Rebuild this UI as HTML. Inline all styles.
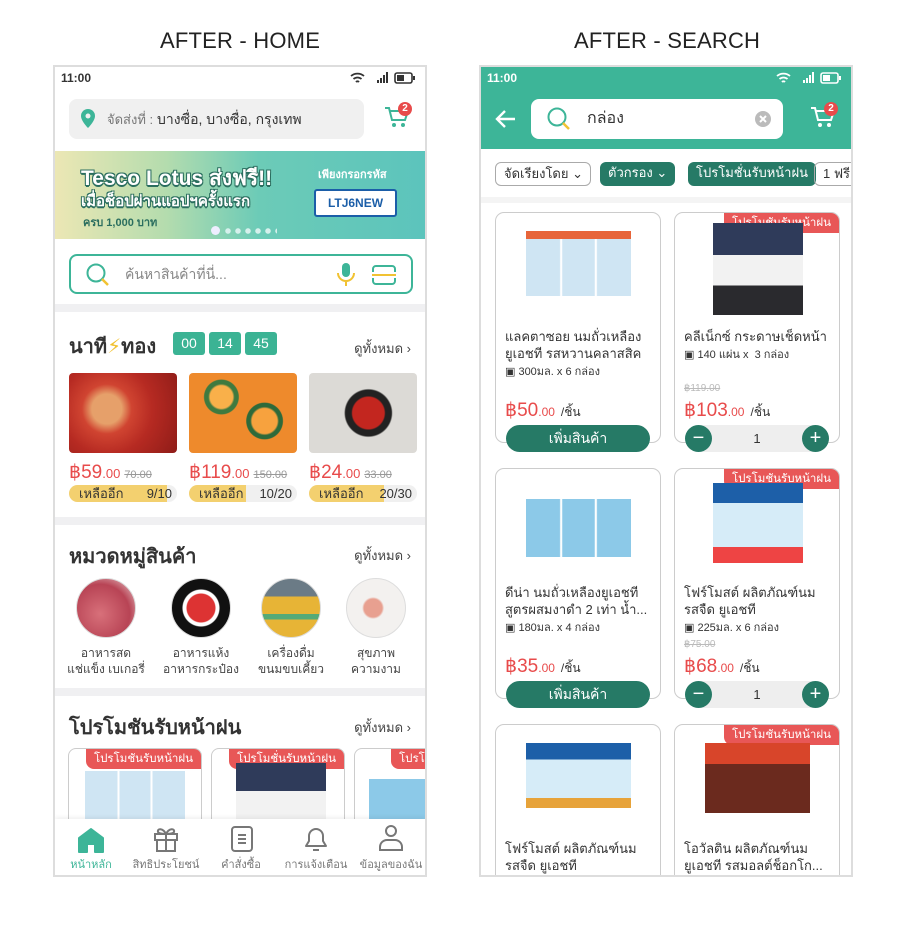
<!DOCTYPE html>
<html><head><meta charset="utf-8">
<style>
*{box-sizing:border-box;margin:0;padding:0}
body{width:906px;height:927px;background:#fff;font-family:"Liberation Sans","DejaVu Sans",sans-serif;position:relative;overflow:hidden;color:#333}
.abs{position:absolute}
.h1{font-size:22px;color:#222;top:28px;letter-spacing:.2px}
.phone{position:absolute;top:65px;width:374px;height:812px;border:2px solid #ddd;overflow:hidden;background:#fff}
.sb{position:absolute;left:0;top:0;width:100%;height:22px;font-size:12px;font-weight:bold;padding:4px 6px}
.sep{position:absolute;left:0;width:100%;background:#f0f0f2}
.teal{background:#3db598}
.tbox{position:absolute;top:265px;width:32px;height:23px;border-radius:3px;background:#3bb394;color:#fff;font-size:14px;text-align:center;line-height:23px}
.img{position:absolute;border-radius:4px}
.price{position:absolute;color:#e84b4b;font-size:19px}
.price small{font-size:13px}
.price s{color:#999;font-size:11px;margin-left:4px}
.bar{position:absolute;height:17px;border-radius:9px;background:#f0f0f0;overflow:hidden;font-size:13px;line-height:17px}
.bar i{position:absolute;left:0;top:0;bottom:0;background:#f3d06f}
.bar span{position:relative;padding-left:10px}
.bar b{position:absolute;right:5px;font-weight:normal}
.sec{position:absolute;left:14px;font-size:20px;font-weight:bold;color:#333}
.all{position:absolute;right:14px;font-size:13px;color:#444}
.circ{position:absolute;width:60px;height:60px;border-radius:50%;border:1px solid #ddd;overflow:hidden}
.cl{position:absolute;font-size:12px;color:#444;text-align:center;width:90px;line-height:16px}
.pcard{position:absolute;border:1px solid #ccc;border-radius:8px;background:#fff;overflow:hidden}
.tag{position:absolute;right:0;top:0;background:#e85757;color:#fff;font-size:11.5px;padding:1px 8px;border-bottom-left-radius:8px;white-space:nowrap}
.nav{position:absolute;left:0;bottom:0;width:100%;height:56px;background:#fff;box-shadow:0 -2px 4px rgba(0,0,0,.06)}
.ni{position:absolute;top:36px;font-size:11px;color:#777;text-align:center;width:76px}
.chip{position:absolute;top:95px;height:24px;border-radius:6px;font-size:13px;line-height:22px;padding:0 8px;white-space:nowrap}
.card{position:absolute;width:166px;height:231px;border:1px solid #ccc;border-radius:9px;background:#fff;overflow:hidden}
.ct{position:absolute;left:9px;top:115px;font-size:13px;line-height:17px;color:#333;width:150px}
.cs{font-size:11px;color:#333}
.cp{position:absolute;left:9px;color:#e84b4b;font-size:19px}
.cp small{font-size:12px}
.cp em{font-style:normal;color:#333;font-size:12px;margin-left:6px}
.btn{position:absolute;width:144px;height:27px;border-radius:14px;background:#267a66;color:#fff;font-size:14px;text-align:center;line-height:27px}
.qty{position:absolute;width:144px;height:27px;border-radius:14px;background:#eee;text-align:center;line-height:27px;font-size:13px}
.qty i,.qty u{position:absolute;top:0;width:27px;height:27px;border-radius:50%;background:#267a66;color:#fff;font-style:normal;text-decoration:none;font-size:20px;line-height:26px}
.qty i{left:0}.qty u{right:0}
.ol{color:#fff;text-shadow:-1px -1px 0 #2b6e5f,1px -1px 0 #2b6e5f,-1px 1px 0 #2b6e5f,1px 1px 0 #2b6e5f,0 2px 0 #2b6e5f}
</style></head><body>
<div class="abs h1" style="left:160px">AFTER - HOME</div>
<div class="abs h1" style="left:574px">AFTER - SEARCH</div>

<!-- LEFT PHONE -->
<div class="phone" style="left:53px">
 <div class="sb">11:00
  <svg class="abs" style="right:10px;top:4px" width="66" height="14"><path d="M2 5a10 10 0 0 1 13 0M4.5 8a6 6 0 0 1 8 0M7 11a2 2 0 0 1 3 0" stroke="#333" stroke-width="1.8" fill="none"/><path d="M28 12h2v-3h-2zM31 12h2v-5h-2zM34 12h2v-8h-2zM37 12h2v-11h-2z" fill="#333"/><rect x="46" y="2" width="17" height="10" rx="2" stroke="#333" stroke-width="1.6" fill="none"/><rect x="48" y="4" width="7" height="6" fill="#333"/><rect x="64" y="5" width="2" height="4" fill="#333"/></svg>
 </div>
 <div class="abs" style="left:14px;top:32px;width:295px;height:40px;background:#f0f0f0;border-radius:8px;font-size:14px;line-height:40px;padding-left:38px;color:#333"><span style="color:#777;font-size:13px">จัดส่งที่ :</span> บางซื่อ, บางซื่อ, กรุงเทพ
  <svg class="abs" style="left:11px;top:10px" width="16" height="20"><path d="M8 0a7 7 0 0 1 7 7c0 5-7 12-7 12S1 12 1 7a7 7 0 0 1 7-7z" fill="#3db598"/><circle cx="8" cy="7" r="2.5" fill="#f0f0f0"/></svg></div>
 <svg class="abs" style="left:328px;top:38px" width="28" height="26"><path d="M2 3h4l3 12h13l3-9H7" stroke="#3db598" stroke-width="2" fill="none"/><circle cx="11" cy="20" r="2" fill="#3db598"/><circle cx="20" cy="20" r="2" fill="#3db598"/></svg>
 <div class="abs" style="left:343px;top:35px;width:14px;height:14px;border-radius:50%;background:#e84b4b;color:#fff;font-size:10px;text-align:center;line-height:14px;font-weight:bold">2</div>
 <div class="abs" style="left:0;top:84px;width:100%;height:88px;background:linear-gradient(90deg,#ece7b4 0%,#b4dcae 30%,#6ccbb7 55%,#5cc4bc 100%)">
  <div class="abs ol" style="left:26px;top:11px;font-size:21px;font-weight:bold">Tesco Lotus ส่งฟรี!!</div>
  <div class="abs ol" style="left:26px;top:38px;font-size:15px;font-weight:bold">เมื่อช็อปผ่านแอปฯครั้งแรก</div>
  <div class="abs" style="left:28px;top:62px;font-size:11px;font-weight:bold;color:#2b6e5f">ครบ 1,000 บาท</div>
  <div class="abs" style="left:263px;top:14px;font-size:11px;font-weight:bold;color:#fff">เพียงกรอกรหัส</div>
  <div class="abs" style="left:259px;top:38px;width:83px;height:28px;background:#fff;border:2px solid #1b5ea8;border-radius:3px;color:#1b5ea8;font-size:12px;font-weight:bold;text-align:center;line-height:24px">LTJ6NEW</div>
  <div class="abs" style="left:156px;top:75px;width:9px;height:9px;border-radius:50%;background:#eef"></div>
  <div class="abs" style="left:168px;top:77px;width:54px;height:6px;background:radial-gradient(circle,#d6f0ec 2.5px,transparent 3px) 0 0/10px 6px"></div>
 </div>
 <div class="abs" style="left:14px;top:187px;width:344px;height:40px;border:2px solid #3db598;border-radius:8px;font-size:14px;color:#888;line-height:36px;padding-left:54px">ค้นหาสินค้าที่นี่...
  <svg class="abs" style="left:14px;top:6px" width="26" height="26"><circle cx="11" cy="11" r="8.5" stroke="#3db598" stroke-width="2" fill="none"/><path d="M17 17l6 6" stroke="#f1c232" stroke-width="2.5"/></svg>
  <svg class="abs" style="left:265px;top:6px" width="20" height="26"><rect x="6" y="1" width="8" height="14" rx="4" fill="#3db598"/><path d="M2 11a8 8 0 0 0 16 0M10 19v5" stroke="#f1c232" stroke-width="2" fill="none"/></svg>
  <svg class="abs" style="left:300px;top:8px" width="26" height="22"><path d="M2 8V5a3 3 0 0 1 3-3h16a3 3 0 0 1 3 3v3M2 14v3a3 3 0 0 0 3 3h16a3 3 0 0 0 3-3v-3" stroke="#3db598" stroke-width="2" fill="none"/><path d="M1 11h24" stroke="#f1c232" stroke-width="2"/></svg>
 </div>
 <div class="sep" style="top:237px;height:8px"></div>
 <div class="sec" style="top:263px">นาที<span style="color:#f1c232">⚡</span>ทอง</div>
 <div class="tbox" style="left:118px">00</div><div class="tbox" style="left:154px">14</div><div class="tbox" style="left:190px">45</div>
 <div class="all" style="top:271px">ดูทั้งหมด ›</div>
 <div class="img" style="left:14px;top:306px;width:108px;height:80px;background:radial-gradient(circle at 35% 45%,#e6a06a 0 18%,#d04431 30%,#b62a22 55%,#8e1c18)"></div>
 <div class="img" style="left:134px;top:306px;width:108px;height:80px;background:radial-gradient(circle at 30% 30%,#f9b04a 0 12%,#3f7a3f 14% 18%,transparent 19%),radial-gradient(circle at 70% 60%,#f7a23e 0 14%,#2e6a3a 16% 20%,transparent 21%),#ee8a2c"></div>
 <div class="img" style="left:254px;top:306px;width:108px;height:80px;background:radial-gradient(circle at 55% 50%,#c3261f 0 22%,#222 24% 32%,#dcdad6 34%)"></div>
 <div class="price" style="left:14px;top:394px">฿59<small>.00</small><s>70.00</s></div>
 <div class="price" style="left:134px;top:394px">฿119<small>.00</small><s>150.00</s></div>
 <div class="price" style="left:254px;top:394px">฿24<small>.00</small><s>33.00</s></div>
 <div class="bar" style="left:14px;top:418px;width:108px"><i style="width:98px"></i><span>เหลืออีก</span><b>9/10</b></div>
 <div class="bar" style="left:134px;top:418px;width:108px"><i style="width:57px"></i><span>เหลืออีก</span><b>10/20</b></div>
 <div class="bar" style="left:254px;top:418px;width:108px"><i style="width:75px"></i><span>เหลืออีก</span><b>20/30</b></div>
 <div class="sep" style="top:450px;height:8px"></div>
 <div class="sec" style="top:473px">หมวดหมู่สินค้า</div>
 <div class="all" style="top:478px">ดูทั้งหมด ›</div>
 <div class="circ" style="left:21px;top:511px;background:radial-gradient(circle at 40% 60%,#d8707a,#b84455 60%,#efe0e0)"></div>
 <div class="circ" style="left:116px;top:511px;background:radial-gradient(circle,#d33 0 14px,#fff 15px 18px,#111 19px)"></div>
 <div class="circ" style="left:206px;top:511px;background:linear-gradient(#6b7b86 30%,#e7b436 30% 60%,#5a7 60% 70%,#e7b436 70%)"></div>
 <div class="circ" style="left:291px;top:511px;background:radial-gradient(circle at 45% 50%,#e8a090 0 9px,#f3f1ef 11px)"></div>
 <div class="cl" style="left:6px;top:578px">อาหารสด<br>แช่แข็ง เบเกอรี่</div>
 <div class="cl" style="left:101px;top:578px">อาหารแห้ง<br>อาหารกระป๋อง</div>
 <div class="cl" style="left:191px;top:578px">เครื่องดื่ม<br>ขนมขบเคี้ยว</div>
 <div class="cl" style="left:276px;top:578px">สุขภาพ<br>ความงาม</div>
 <div class="sep" style="top:621px;height:8px"></div>
 <div class="sec" style="top:644px">โปรโมชันรับหน้าฝน</div>
 <div class="all" style="top:650px">ดูทั้งหมด ›</div>
 <div class="pcard" style="left:13px;top:681px;width:134px;height:100px"><div class="tag">โปรโมชันรับหน้าฝน</div><div class="abs" style="left:16px;top:22px;width:100px;height:60px;background:linear-gradient(90deg,#cfe5f3 32%,#fff 33% 34%,#cfe5f3 35% 65%,#fff 66% 67%,#cfe5f3 68%)"></div></div>
 <div class="pcard" style="left:156px;top:681px;width:134px;height:100px"><div class="tag">โปรโมชั่นรับหน้าฝน</div><div class="abs" style="left:24px;top:14px;width:90px;height:70px;background:linear-gradient(#2f3b5a 40%,#f2f2f2 40%)"></div></div>
 <div class="pcard" style="left:299px;top:681px;width:134px;height:100px"><div class="tag" style="right:auto;left:36px">โปรโมชั</div><div class="abs" style="left:14px;top:30px;width:60px;height:50px;background:#8cc9e8"></div></div>
 <div class="nav">
  <svg class="abs" style="left:22px;top:8px" width="28" height="26"><path d="M2 11L14 2l12 9v14H18v-8h-8v8H2z" fill="#3db598" stroke="#3db598" stroke-width="2" stroke-linejoin="round"/></svg>
  <svg class="abs" style="left:97px;top:6px" width="28" height="28"><rect x="3" y="9" width="22" height="6" stroke="#777" stroke-width="2" fill="none"/><path d="M5 15v11h18V15M14 9v17M14 9c-3-6-9-6-8-2 1 2 8 2 8 2s7 0 8-2c1-4-5-4-8 2" stroke="#777" stroke-width="2" fill="none"/></svg>
  <svg class="abs" style="left:175px;top:6px" width="24" height="28"><rect x="2" y="2" width="20" height="24" rx="3" stroke="#777" stroke-width="2" fill="none"/><path d="M8 10h8M8 14h8M8 18h8" stroke="#777" stroke-width="2"/></svg>
  <svg class="abs" style="left:247px;top:6px" width="28" height="28"><path d="M4 21h20l-3-5V11a7 7 0 0 0-14 0v5z" stroke="#777" stroke-width="2" fill="none" stroke-linejoin="round"/><path d="M11 25h6" stroke="#777" stroke-width="2"/></svg>
  <svg class="abs" style="left:323px;top:5px" width="26" height="28"><circle cx="13" cy="7" r="5" stroke="#777" stroke-width="2" fill="none"/><path d="M2 26v-3a7 7 0 0 1 7-7h8a7 7 0 0 1 7 7v3z" stroke="#777" stroke-width="2" fill="none"/></svg>
  <div class="ni" style="left:-2px;color:#3db598">หน้าหลัก</div>
  <div class="ni" style="left:73px">สิทธิประโยชน์</div>
  <div class="ni" style="left:148px">คำสั่งซื้อ</div>
  <div class="ni" style="left:223px">การแจ้งเตือน</div>
  <div class="ni" style="left:298px">ข้อมูลของฉัน</div>
 </div>
</div>

<!-- RIGHT PHONE -->
<div class="phone" style="left:479px">
 <div class="abs teal" style="left:0;top:0;width:100%;height:82px"></div>
 <div class="sb" style="color:#fff">11:00
  <svg class="abs" style="right:10px;top:4px" width="66" height="14"><path d="M2 5a10 10 0 0 1 13 0M4.5 8a6 6 0 0 1 8 0M7 11a2 2 0 0 1 3 0" stroke="#fff" stroke-width="1.8" fill="none"/><path d="M28 12h2v-3h-2zM31 12h2v-5h-2zM34 12h2v-8h-2zM37 12h2v-11h-2z" fill="#fff"/><rect x="46" y="2" width="17" height="10" rx="2" stroke="#fff" stroke-width="1.6" fill="none"/><rect x="48" y="4" width="7" height="6" fill="#fff"/><rect x="64" y="5" width="2" height="4" fill="#fff"/></svg>
 </div>
 <svg class="abs" style="left:14px;top:42px" width="22" height="20"><path d="M20 10H3M10 2L2 10l8 8" stroke="#fff" stroke-width="2.4" fill="none"/></svg>
 <div class="abs" style="left:50px;top:32px;width:252px;height:40px;background:#fff;border-radius:8px;font-size:16px;line-height:40px;padding-left:56px">กล่อง
  <svg class="abs" style="left:15px;top:7px" width="26" height="26"><circle cx="11" cy="11" r="8.5" stroke="#3db598" stroke-width="2" fill="none"/><path d="M17 17l6 6" stroke="#f1c232" stroke-width="2.5"/></svg>
  <svg class="abs" style="left:224px;top:12px" width="16" height="16"><circle cx="8" cy="8" r="8" fill="#bbb"/><path d="M5 5l6 6M11 5l-6 6" stroke="#fff" stroke-width="2"/></svg></div>
 <svg class="abs" style="left:328px;top:38px" width="28" height="26"><path d="M2 3h4l3 12h13l3-9H7" stroke="#fff" stroke-width="2" fill="none"/><circle cx="11" cy="20" r="2" fill="#fff"/><circle cx="20" cy="20" r="2" fill="#fff"/></svg>
 <div class="abs" style="left:343px;top:35px;width:14px;height:14px;border-radius:50%;background:#e84b4b;color:#fff;font-size:10px;text-align:center;line-height:14px;font-weight:bold">2</div>
 <div class="chip" style="left:14px;border:1px solid #aaa;color:#333;width:96px">จัดเรียงโดย ⌄</div>
 <div class="chip" style="left:119px;background:#267a66;color:#fff">ตัวกรอง ⌄</div>
 <div class="chip" style="left:207px;background:#267a66;color:#fff">โปรโมชั่นรับหน้าฝน</div>
 <div class="chip" style="left:333px;border:1px solid #aaa;color:#333">1 ฟรี 1</div>
 <div class="sep" style="top:130px;height:6px;background:#f4f4f4"></div>

 <div class="card" style="left:14px;top:145px"><div class="abs" style="left:30px;top:18px;width:105px;height:65px;background:linear-gradient(90deg,#cfe5f3 32%,#fff 33% 34%,#cfe5f3 35% 65%,#fff 66% 67%,#cfe5f3 68%);border-top:8px solid #e7653a"></div>
  <div class="ct">แลคตาซอย นมถั่วเหลือง<br>ยูเอชที รสหวานคลาสสิค<br><span class="cs">▣ 300มล. x 6 กล่อง</span></div>
  <div class="cp" style="top:186px">฿50<small>.00</small><em>/ชิ้น</em></div></div>
 <div class="btn" style="left:25px;top:358px">เพิ่มสินค้า</div>

 <div class="card" style="left:193px;top:145px"><div class="tag">โปรโมชันรับหน้าฝน</div><div class="abs" style="left:38px;top:10px;width:90px;height:92px;background:linear-gradient(#2f3b5a 35%,#f2f2f2 35% 68%,#2a2a2e 68%)"></div>
  <div class="ct">คลีเน็กซ์ กระดาษเช็ดหน้า<br><span class="cs">▣ 140 แผ่น x &nbsp;3 กล่อง</span></div>
  <div class="abs" style="left:9px;top:170px;font-size:10px;color:#bbb;text-decoration:line-through">฿119.00</div>
  <div class="cp" style="top:186px">฿103<small>.00</small><em>/ชิ้น</em></div></div>
 <div class="qty" style="left:204px;top:358px"><i>−</i>1<u>+</u></div>

 <div class="card" style="left:14px;top:401px"><div class="abs" style="left:30px;top:30px;width:105px;height:58px;background:linear-gradient(90deg,#8cc9e8 32%,#fff 33% 34%,#8cc9e8 35% 65%,#fff 66% 67%,#8cc9e8 68%)"></div>
  <div class="ct">ดีน่า นมถั่วเหลืองยูเอชที<br>สูตรผสมงาดำ 2 เท่า น้ำ...<br><span class="cs">▣ 180มล. x 4 กล่อง</span></div>
  <div class="cp" style="top:186px">฿35<small>.00</small><em>/ชิ้น</em></div></div>
 <div class="btn" style="left:25px;top:614px">เพิ่มสินค้า</div>

 <div class="card" style="left:193px;top:401px"><div class="tag">โปรโมชันรับหน้าฝน</div><div class="abs" style="left:38px;top:14px;width:90px;height:80px;background:linear-gradient(#1d5fa8 25%,#d6ecf8 25% 80%,#e44 80%)"></div>
  <div class="ct">โฟร์โมสต์ ผลิตภัณฑ์นม<br>รสจืด ยูเอชที<br><span class="cs">▣ 225มล. x 6 กล่อง</span></div>
  <div class="abs" style="left:9px;top:170px;font-size:10px;color:#bbb;text-decoration:line-through">฿75.00</div>
  <div class="cp" style="top:186px">฿68<small>.00</small><em>/ชิ้น</em></div></div>
 <div class="qty" style="left:204px;top:614px"><i>−</i>1<u>+</u></div>

 <div class="card" style="left:14px;top:657px"><div class="abs" style="left:30px;top:18px;width:105px;height:65px;background:linear-gradient(#1d5fa8 25%,#d6ecf8 25% 85%,#e7a33a 85%)"></div>
  <div class="ct">โฟร์โมสต์ ผลิตภัณฑ์นม<br>รสจืด ยูเอชที</div></div>
 <div class="card" style="left:193px;top:657px"><div class="tag">โปรโมชันรับหน้าฝน</div><div class="abs" style="left:30px;top:18px;width:105px;height:70px;background:linear-gradient(#d8452a 30%,#6b2a1e 30%)"></div>
  <div class="ct">โอวัลติน ผลิตภัณฑ์นม<br>ยูเอชที รสมอลต์ช็อกโก...</div></div>
</div>
</body></html>
